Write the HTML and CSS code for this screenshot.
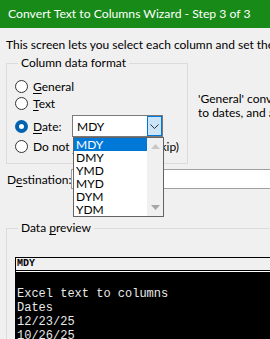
FILE: index.html
```html
<!DOCTYPE html>
<html lang="en">
<head>
    <meta charset="UTF-8">
    <meta name="viewport" content="width=device-width, initial-scale=1.0">
    <title>Convert Text to Columns Wizard - Step 3 of 3</title>
    <link rel="stylesheet" href="styles.css">
</head>
<body>
    <div class="titlebar">Convert Text to Columns Wizard - Step 3 of 3</div>

    <div class="dialog">
        <p class="intro">This screen lets you select each column and set the Data Format.</p>

        <div class="format-row">
            <fieldset class="group format">
                <legend>Column data format</legend>
                <div class="radio-row"><span class="radio"></span><span><u>G</u>eneral</span></div>
                <div class="radio-row"><span class="radio"></span><span><u>T</u>ext</span></div>
                <div class="radio-row date-row">
                    <span class="radio checked"></span><span class="date-label"><u>D</u>ate:</span>
                    <div class="combo">
                        <span class="combo-value">MDY</span>
                        <span class="combo-button">
                            <svg width="9" height="5" viewBox="0 0 9 5"><path d="M0.5 0.5 L4.5 4.5 L8.5 0.5" fill="none" stroke="#333" stroke-width="1"/></svg>
                        </span>
                        <div class="combo-list">
                            <ul>
                                <li class="selected">MDY</li>
                                <li>DMY</li>
                                <li>YMD</li>
                                <li>MYD</li>
                                <li>DYM</li>
                                <li>YDM</li>
                            </ul>
                            <div class="list-scroll">
                                <svg width="9" height="5" viewBox="0 0 9 5"><path d="M0 5 L4.5 0 L9 5 Z" fill="#c8c8c8"/></svg>
                                <svg width="9" height="5" viewBox="0 0 9 5"><path d="M0 0 L4.5 5 L9 0 Z" fill="#a6a6a6"/></svg>
                            </div>
                        </div>
                    </div>
                </div>
                <div class="radio-row"><span class="radio"></span><span>Do not <u>i</u>mport column (skip)</span></div>
            </fieldset>
            <p class="hint">'General' converts numeric values to numbers, date values<br>to dates, and all remaining values to text.</p>
        </div>

        <div class="dest-row">
            <span class="dest-label">D<u>e</u>stination:</span>
            <div class="dest-input"></div>
        </div>

        <fieldset class="group preview">
            <legend>Data <u>p</u>review</legend>
            <div class="preview-box">
                <div class="preview-head">MDY</div>
                <div class="preview-data">
                    <div class="line">&nbsp;</div>
                    <div class="line">Excel text to columns</div>
                    <div class="line">Dates</div>
                    <div class="line">12/23/25</div>
                    <div class="line">10/26/25</div>
                </div>
            </div>
        </fieldset>
    </div>
</body>
</html>
```

FILE: styles.css
```css
body {
    margin: 0;
    width: 270px;
    height: 339px;
    overflow: hidden;
    background: #f0f0f0;
    font-family: 'Lato', sans-serif;
    font-size: 12px;
    color: #000;
}

u {
    text-decoration-thickness: 1px;
    text-underline-offset: 2px;
}

.titlebar {
    height: 28px;
    line-height: 28px;
    padding-left: 8px;
    background: #178a17;
    color: #fff;
    font-size: 12.2px;
    white-space: nowrap;
}

.dialog {
    padding: 0 0 0 6px;
    white-space: nowrap;
    overflow: hidden;
}

.intro {
    margin: 9px 0 0 0;
    line-height: 15px;
}

.format-row {
    display: flex;
    align-items: flex-start;
    margin-top: 4px;
}

.group {
    margin: 0;
    border: 1px solid #dcdcdc;
    min-width: 0;
}

.group legend {
    padding: 0 3px;
    margin-left: 3px;
    line-height: 14px;
}

.format {
    width: 182px;
    box-sizing: border-box;
    height: 108px;
    padding: 8px 0 0 8px;
    flex-shrink: 0;
    overflow: visible;
}

.radio-row {
    display: flex;
    align-items: center;
    height: 17px;
    gap: 5px;
}

.date-row {
    height: 22px;
    margin: 3px 0 1px;
}

.radio {
    width: 13px;
    height: 13px;
    box-sizing: border-box;
    border: 1px solid #333;
    border-radius: 50%;
    background: #fff;
    flex-shrink: 0;
}

.radio.checked {
    border: 4px solid #0063b1;
}

.date-label {
    width: 34px;
}

.combo {
    position: relative;
    width: 91px;
    height: 22px;
    box-sizing: border-box;
    border: 1px solid #7a7a7a;
    background: #fff;
    display: flex;
    align-items: center;
    justify-content: space-between;
}

.combo-value {
    padding-left: 4px;
}

.combo-button {
    width: 15px;
    height: 20px;
    box-sizing: border-box;
    border: 1px solid #0078d7;
    background: #cce4f7;
    display: flex;
    align-items: center;
    justify-content: center;
}

.combo-list {
    position: absolute;
    top: 21px;
    left: 0;
    width: 91px;
    height: 80px;
    box-sizing: border-box;
    border: 1px solid #646464;
    background: #fff;
    display: flex;
    z-index: 5;
}

.combo-list ul {
    list-style: none;
    margin: 0;
    padding: 0;
    flex: 1;
}

.combo-list li {
    height: 13px;
    line-height: 13px;
    padding-left: 2px;
}

.combo-list li.selected {
    background: #0078d7;
    color: #fff;
}

.list-scroll {
    width: 16px;
    background: #f0f0f0;
    display: flex;
    flex-direction: column;
    align-items: center;
    justify-content: space-between;
    padding: 6px 0 6px;
}

.hint {
    margin: 36px 0 0 10px;
    line-height: 14px;
}

.dest-row {
    display: flex;
    align-items: center;
    margin-top: 5px;
    height: 20px;
}

.dest-label {
    width: 64px;
    padding-left: 1px;
}

.dest-input {
    flex: 1;
    height: 20px;
    box-sizing: border-box;
    border: 1px solid #a0a0a0;
    border-right: none;
    background: #fff;
}

.preview {
    margin-top: 32px;
    padding: 22px 0 0 8px;
    border-right: none;
    border-bottom: none;
    height: 97px;
    overflow: hidden;
}

.preview-box {
    border-left: 1px solid #000;
    border-top: 1px solid #000;
    background: #000;
}

.preview-head {
    height: 12px;
    line-height: 12px;
    background: #f0f0f0;
    border-bottom: 1px solid #000;
    box-shadow: 0 1px 0 #fff;
    margin-bottom: 2px;
    font-family: 'Liberation Mono', monospace;
    font-size: 10px;
    font-weight: bold;
    padding-left: 1px;
    color: #000;
}

.preview-data {
    font-family: 'Liberation Mono', monospace;
    font-size: 12px;
    color: #e8e8e8;
    padding-left: 1px;
}

.line {
    height: 14px;
    line-height: 14px;
}
```
